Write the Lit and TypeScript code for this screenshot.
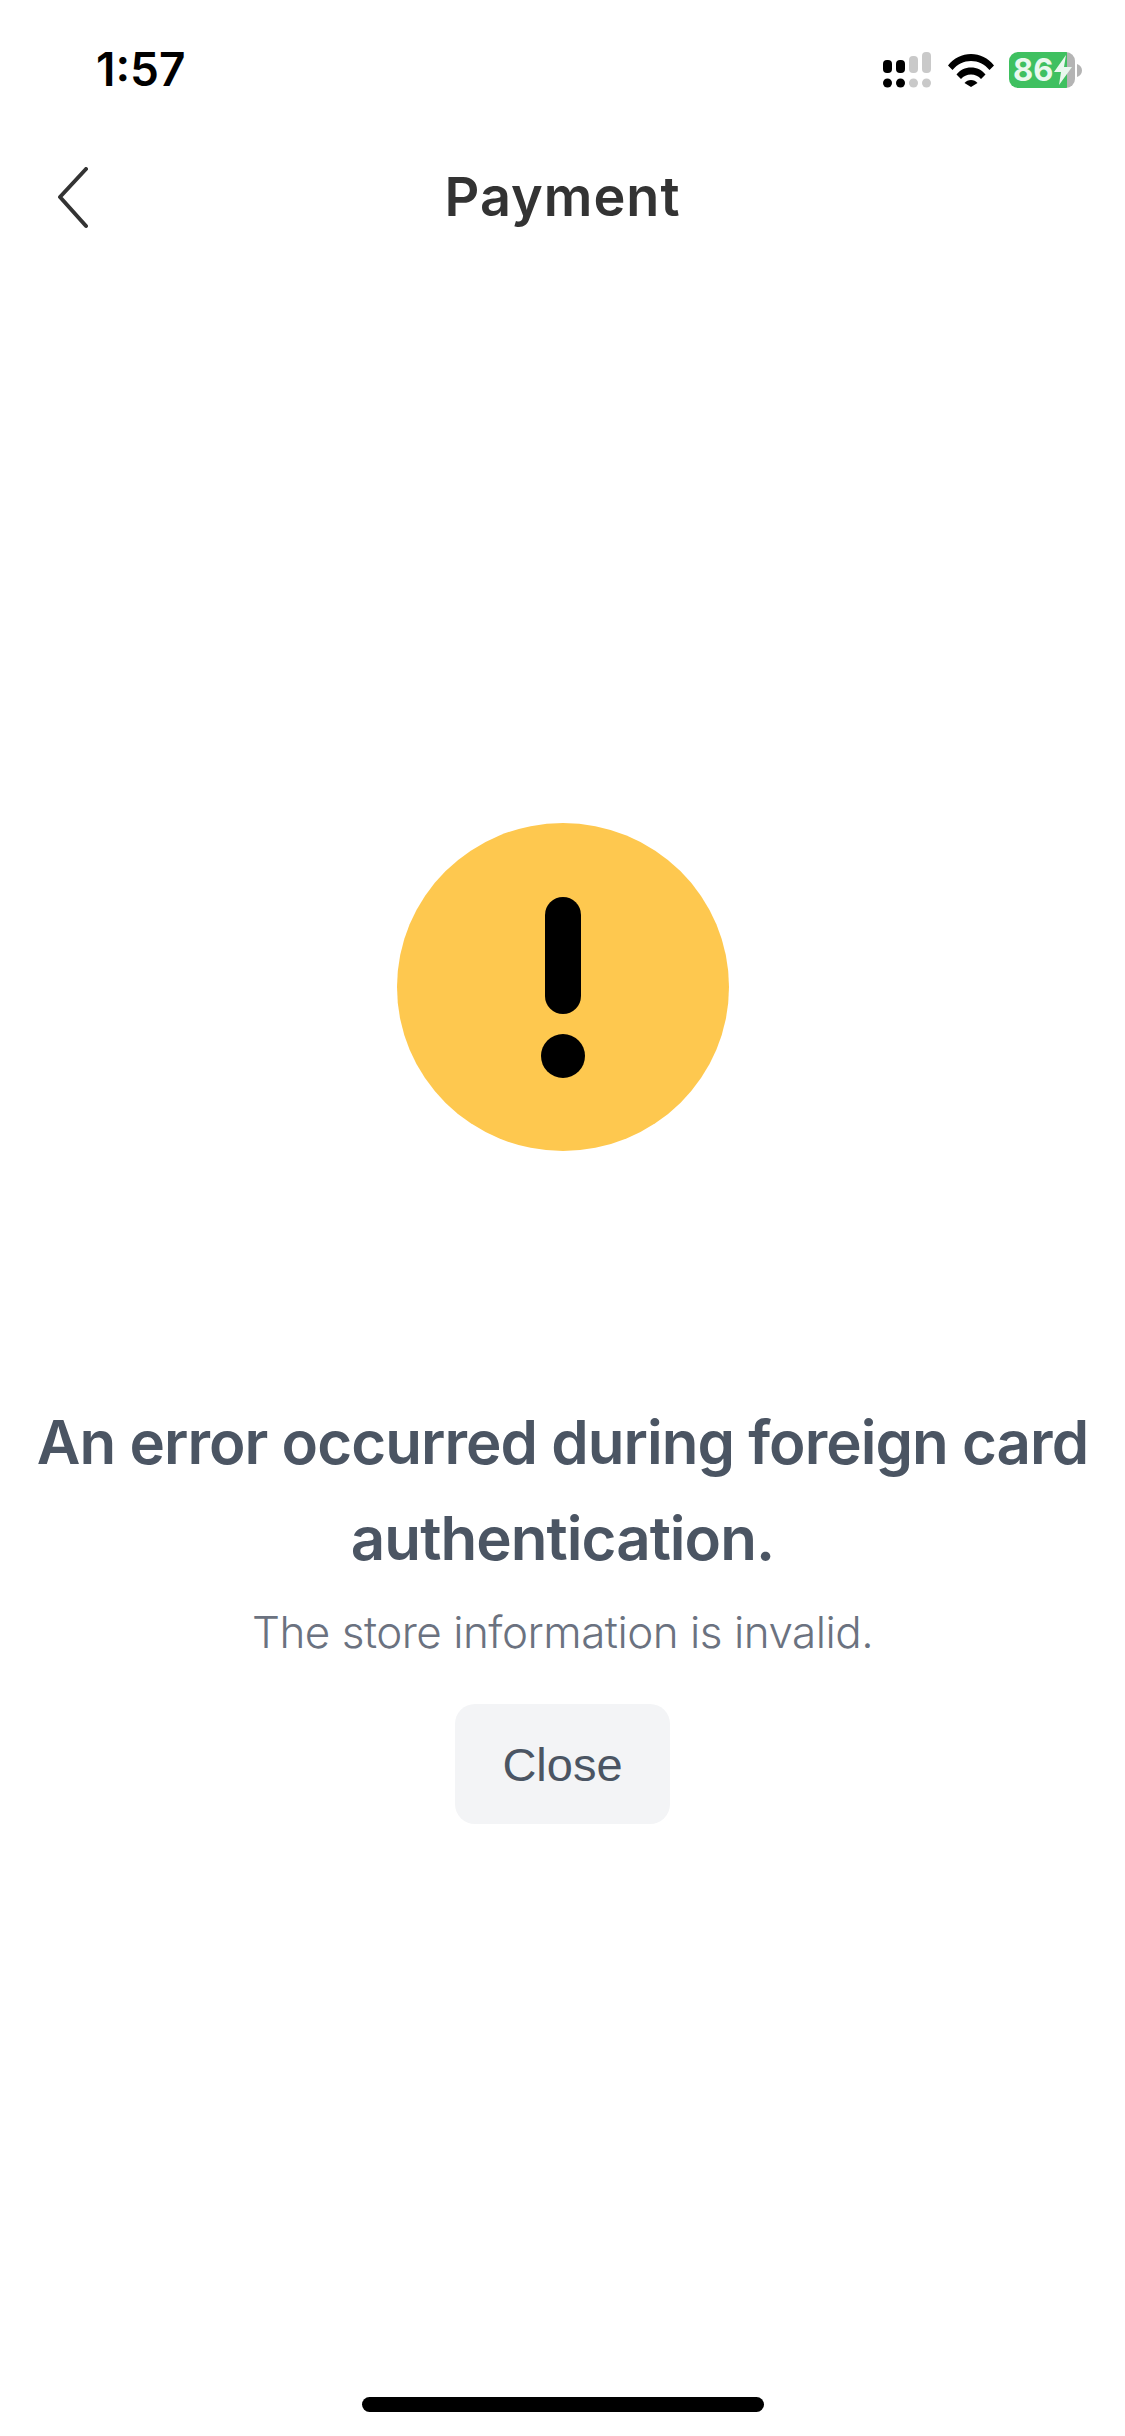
import { LitElement, html, css, TemplateResult } from 'lit';
import { customElement } from 'lit/decorators.js';

@customElement('app-root')
export class AppRoot extends LitElement {
  static styles = css`
    :host {
      display: flex;
      flex-direction: column;
      width: 1125px;
      height: 2436px;
      background: #fff;
      overflow: hidden;
      font-family: 'Inter', 'Liberation Sans', sans-serif;
    }

    .status {
      display: flex;
      align-items: center;
      justify-content: space-between;
      height: 68px;
      padding: 35px 43px 0 96px;
      flex: none;
    }

    .time {
      font-size: 46px;
      font-weight: 600;
      line-height: 68px;
      color: #000;
    }

    .indicators {
      display: flex;
      align-items: center;
      gap: 17px;
      margin-top: 2px;
    }

    .indicators svg {
      display: block;
    }

    .battery {
      display: flex;
      align-items: center;
      gap: 2px;
      margin-left: -2px;
    }

    .battery-body {
      display: flex;
      align-items: center;
      width: 66px;
      height: 36px;
      border-radius: 9px;
      padding-left: 4px;
      box-sizing: border-box;
      background: linear-gradient(90deg, #3fc060 0 58px, #b4b4b4 58px);
      color: #eaf8ee;
      font-size: 31px;
      font-weight: 700;
      line-height: 36px;
    }

    .battery-body svg {
      flex: none;
    }

    .nav {
      display: flex;
      align-items: center;
      justify-content: center;
      height: 92px;
      margin-top: 48px;
      position: relative;
      flex: none;
    }

    .back {
      position: absolute;
      left: 56px;
      top: 16px;
      display: block;
    }

    .title {
      font-size: 54px;
      font-weight: 600;
      line-height: 92px;
      letter-spacing: 1px;
      color: #333;
    }

    .content {
      display: flex;
      flex-direction: column;
      align-items: center;
      margin-top: 580px;
    }

    .alert {
      display: block;
    }

    .heading {
      margin: 243px 0 0;
      width: 1125px;
      text-align: center;
      font-size: 60px;
      font-weight: 600;
      line-height: 96px;
      letter-spacing: -0.95px;
      color: #4b5563;
    }

    .detail {
      margin: 14px 0 0;
      font-size: 44px;
      font-weight: 300;
      line-height: 64px;
      letter-spacing: -0.5px;
      color: #6b7280;
    }

    .close {
      width: 215px;
      height: 120px;
      margin-top: 40px;
      border: 0;
      border-radius: 20px;
      background: #f3f4f6;
      color: #4b5563;
      font-family: 'Liberation Sans', Arial, sans-serif;
      font-size: 47px;
      padding: 0;
    }

    .home {
      width: 402px;
      height: 15px;
      margin: auto auto 24px;
      border-radius: 8px;
      background: #000;
      flex: none;
    }
  `;

  private renderSignal(): TemplateResult {
    return html`
      <svg width="48" height="36" viewBox="0 0 48 36">
        <rect x="0" y="8" width="9" height="13" rx="4" fill="#000"></rect>
        <rect x="13" y="8" width="9" height="13" rx="4" fill="#000"></rect>
        <rect x="26" y="4" width="9" height="17" rx="4" fill="#c9c9c9"></rect>
        <rect x="39" y="0" width="9" height="21" rx="4" fill="#c9c9c9"></rect>
        <circle cx="4.500" cy="31" r="4.500" fill="#000"></circle>
        <circle cx="17.500" cy="31" r="4.500" fill="#000"></circle>
        <circle cx="30.500" cy="31" r="4.500" fill="#c9c9c9"></circle>
        <circle cx="43.500" cy="31" r="4.500" fill="#c9c9c9"></circle>
      </svg>
    `;
  }

  private renderWifi(): TemplateResult {
    return html`
      <svg width="46" height="34" viewBox="0 0 46 34">
        <path d="M0 12.500C6 5 14 1 23 1s17 4 23 11.500L41.500 17C36.500 11 30 8 23 8S9.500 11 4.500 17Z" fill="#000"></path>
        <path d="M8.500 21.500C12 17 17 14.500 23 14.500s11 2.500 14.500 7L33 26c-2.500-3-6-4.500-10-4.500S15.500 23 13 26Z" fill="#000"></path>
        <path d="M16.500 30c1.500-2 4-3 6.500-3s5 1 6.500 3L23 34Z" fill="#000"></path>
      </svg>
    `;
  }

  render(): TemplateResult {
    return html`
      <div class="status">
        <span class="time">1:57</span>
        <div class="indicators">
          ${this.renderSignal()} ${this.renderWifi()}
          <div class="battery">
            <div class="battery-body">
              <span>86</span>
              <svg width="20" height="30" viewBox="0 0 20 30">
                <path d="M13 0 1 17h7l-2 13L19 12h-8Z" fill="#eaf8ee"></path>
              </svg>
            </div>
            <svg width="5" height="13" viewBox="0 0 5 13">
              <path d="M0 0c3 1 5 3.500 5 6.500S3 12 0 13Z" fill="#b4b4b4"></path>
            </svg>
          </div>
        </div>
      </div>

      <div class="nav">
        <svg class="back" width="34" height="62" viewBox="0 0 34 62">
          <path d="M30 2 4 30l26 29" fill="none" stroke="#333" stroke-width="4" stroke-linecap="round" stroke-linejoin="round"></path>
        </svg>
        <span class="title">Payment</span>
      </div>

      <div class="content">
        <svg class="alert" width="332" height="328" viewBox="0 0 332 328">
          <ellipse cx="166" cy="164" rx="166" ry="164" fill="#fec84f"></ellipse>
          <rect x="148" y="74" width="36" height="117" rx="18" fill="#000"></rect>
          <circle cx="166" cy="233" r="22" fill="#000"></circle>
        </svg>
        <h1 class="heading">An error occurred during foreign card authentication.</h1>
        <p class="detail">The store information is invalid.</p>
        <button class="close">Close</button>
      </div>

      <div class="home"></div>
    `;
  }
}
